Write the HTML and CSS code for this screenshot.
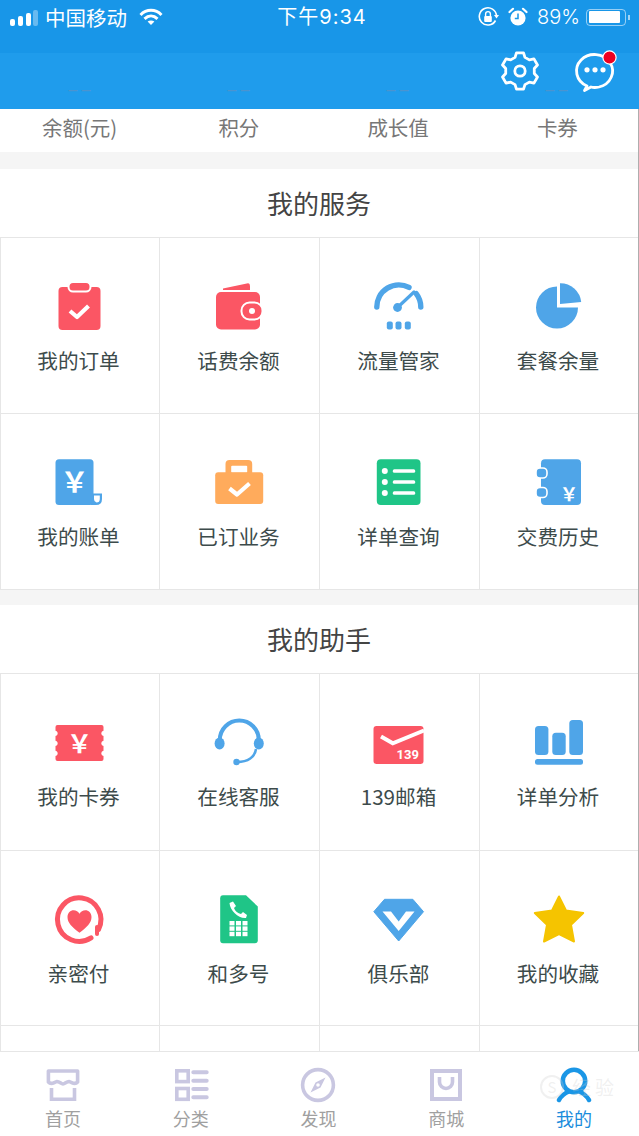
FILE: index.html
```html
<!DOCTYPE html>
<html lang="zh-CN">
<head>
<meta charset="utf-8">
<title>我的</title>
<link rel="stylesheet" href="styles.css">
</head>
<body>
<div class="screen">
  <div class="status">
    <div class="status-left">
      <svg class="sig" width="28" height="18" viewBox="0 0 28 18"><rect x="0" y="9" width="5" height="7" rx="2" fill="#fff"/><rect x="8" y="6" width="5" height="10" rx="2" fill="#fff"/><rect x="16" y="3" width="5" height="13" rx="2" fill="#fff"/><rect x="23" y="0" width="5" height="16" rx="2" fill="#fff" opacity=".35"/></svg>
      <span class="carrier">中国移动</span>
      <svg width="24" height="18" viewBox="0 0 24 18" fill="none" stroke="#fff" stroke-width="3"><path d="M1.5 7 C7.5 .8 16.5 .8 22.5 7"/><path d="M5.5 10.8 C9.5 7 14.5 7 18.5 10.8"/><path d="M12 17 L8.6 13.6 C10.6 12 13.4 12 15.4 13.6 Z" fill="#fff" stroke="none"/></svg>
    </div>
    <div class="time">下午9:34</div>
    <div class="status-right">
      <svg width="22" height="22" viewBox="0 0 22 22" fill="none"><path d="M18.5 14.5 A8.6 8.6 0 1 1 19.5 10" stroke="#fff" stroke-width="1.6"/><path d="M17 9 L22 9 L19.5 12.5 Z" fill="#fff"/><rect x="7.2" y="10" width="7.6" height="6" rx="1" fill="#fff"/><path d="M8.6 10 V8 A2.4 2.4 0 0 1 13.4 8 V10" stroke="#fff" stroke-width="1.4"/></svg>
      <svg width="20" height="20" viewBox="0 0 20 20"><circle cx="10" cy="11" r="7.6" fill="#fff"/><path d="M1.5 5 L5 1.8 M18.5 5 L15 1.8" stroke="#fff" stroke-width="2.2" stroke-linecap="round"/><path d="M10 6.5 V11.5 H6.8" stroke="#1896e8" stroke-width="1.5" fill="none"/></svg>
      <span class="pct">89%</span>
      <span class="battery"><span class="battery-fill"></span></span>
      <span class="battery-nub"></span>
    </div>
  </div>

  <header class="header">
    <div class="values"><span>– –</span><span>– –</span><span>– –</span><span>– –</span></div>
    <div class="actions">
      <svg width="40" height="40" viewBox="0 0 40 40" fill="none" stroke="#fff" stroke-width="2.8" stroke-linejoin="round"><path d="M15.04 6.37 L16.47 1.84 H23.53 L24.96 6.37 L29.32 8.89 L33.96 7.86 L37.49 13.98 L34.28 17.48 V22.52 L37.49 26.02 L33.96 32.14 L29.32 31.11 L24.96 33.63 L23.53 38.16 H16.47 L15.04 33.63 L10.68 31.11 L6.04 32.14 L2.51 26.02 L5.72 22.52 V17.48 L2.51 13.98 L6.04 7.86 L10.68 8.89 Z"/><circle cx="20" cy="20" r="5.2"/></svg>
      <svg width="40" height="40" viewBox="0 0 40 40" fill="none"><path d="M12 35 A18 16.5 0 1 1 24 36 C21 36.6 18 36.6 16 36 L9.5 39.5 Z" stroke="#fff" stroke-width="2.8" stroke-linejoin="round"/><circle cx="12" cy="18.8" r="2.6" fill="#fff"/><circle cx="20" cy="18.8" r="2.6" fill="#fff"/><circle cx="28" cy="18.8" r="2.6" fill="#fff"/><circle cx="34.5" cy="6.5" r="6.6" fill="#ee0020" stroke="#fff" stroke-width="1.2"/></svg>
    </div>
  </header>

  <main class="content">
    <div class="stats"><span>余额(元)</span><span>积分</span><span>成长值</span><span>卡券</span></div>

    <section class="section">
      <h2 class="title">我的服务</h2>
      <div class="grid">
        <div class="cell">
          <svg class="icon" viewBox="0 0 56 56"><rect x="7.5" y="7" width="42" height="43" rx="4" fill="#fb5664"/><rect x="17.5" y="2" width="22" height="9.5" rx="4.5" fill="#fb5664" stroke="#fff" stroke-width="2"/><path d="M19 31 L26 37 L37.5 26" fill="none" stroke="#fff" stroke-width="4.2" stroke-linejoin="round"/></svg>
          <span class="label">我的订单</span>
        </div>
        <div class="cell">
          <svg class="icon" viewBox="0 0 56 56"><path d="M12 8.5 L37 3.2 Q39 3 39 6 V10 H12 Z" fill="#fb5664"/><rect x="5" y="12" width="44" height="37.5" rx="5" fill="#fb5664"/><rect x="30.5" y="22.5" width="21" height="17" rx="8" fill="#fb5664" stroke="#fff" stroke-width="2"/><circle cx="41" cy="31" r="3" fill="#fff"/></svg>
          <span class="label">话费余额</span>
        </div>
        <div class="cell">
          <svg class="icon" viewBox="0 0 56 56" fill="none"><path d="M5.8 27 A22 22 0 0 1 38 7.4" stroke="#4fa5e8" stroke-width="5.4" stroke-linecap="round"/><path d="M45.2 13.6 A22 22 0 0 1 49.8 27" stroke="#4fa5e8" stroke-width="5.4" stroke-linecap="round"/><path d="M26.5 27.5 L43 12" stroke="#4fa5e8" stroke-width="3.2" stroke-linecap="round"/><circle cx="26.5" cy="27.5" r="4.4" fill="#4fa5e8"/><rect x="15.8" y="41.5" width="6" height="8" rx="2" fill="#4fa5e8"/><rect x="24.5" y="41.5" width="6" height="8" rx="2" fill="#4fa5e8"/><rect x="33.8" y="41.5" width="6" height="8" rx="2" fill="#4fa5e8"/></svg>
          <span class="label">流量管家</span>
        </div>
        <div class="cell">
          <svg class="icon" viewBox="0 0 56 56"><path d="M26 6.5 V27.5 H47 A21 21 0 1 1 26 6.5 Z" fill="#4fa5e8"/><path d="M29 3.2 A21 21 0 0 1 50.2 22 L29 24 Z" fill="#4fa5e8"/></svg>
          <span class="label">套餐余量</span>
        </div>
        <div class="cell">
          <svg class="icon" viewBox="0 0 56 56"><rect x="4.5" y="3.3" width="38" height="45.7" rx="3.5" fill="#4fa5e8"/><path d="M40 37.5 H51 V43 Q51 49 45 49 H40 Z" fill="#4fa5e8"/><path d="M43 39.6 H48.8 V43 Q48.8 46.6 45.5 46.6 Q43 46 43 43 Z" fill="#fff"/><text class="yen" x="23.5" y="37" font-size="28">￥</text></svg>
          <span class="label">我的账单</span>
        </div>
        <div class="cell">
          <svg class="icon" viewBox="0 0 56 56"><rect x="14.5" y="4" width="26.7" height="20" rx="4" fill="#ffab5c"/><rect x="20.2" y="9.7" width="16" height="7" rx="1" fill="#fff"/><rect x="4.2" y="16.3" width="48" height="31.7" rx="3" fill="#ffab5c"/><path d="M18.5 32.5 L26 38.5 L38.5 27.5" fill="none" stroke="#fff" stroke-width="4.2" stroke-linejoin="round"/></svg>
          <span class="label">已订业务</span>
        </div>
        <div class="cell">
          <svg class="icon" viewBox="0 0 56 56"><rect x="5.8" y="3.3" width="43.7" height="45.7" rx="4" fill="#1fc587"/><circle cx="13.8" cy="15" r="3" fill="#fff"/><circle cx="13.8" cy="26" r="3" fill="#fff"/><circle cx="13.8" cy="37" r="3" fill="#fff"/><rect x="21.8" y="13.2" width="22.4" height="3.6" rx="1.5" fill="#fff"/><rect x="21.8" y="24.2" width="22.4" height="3.6" rx="1.5" fill="#fff"/><rect x="21.8" y="35.2" width="22.4" height="3.6" rx="1.5" fill="#fff"/></svg>
          <span class="label">详单查询</span>
        </div>
        <div class="cell">
          <svg class="icon" viewBox="0 0 56 56"><rect x="10" y="3.3" width="40" height="45.7" rx="4" fill="#4fa5e8"/><rect x="5" y="12" width="11" height="10" rx="4" fill="#4fa5e8" stroke="#fff" stroke-width="1.6"/><rect x="5" y="31.5" width="11" height="10" rx="4" fill="#4fa5e8" stroke="#fff" stroke-width="1.6"/><text class="yen" x="38" y="45" font-size="18">￥</text></svg>
          <span class="label">交费历史</span>
        </div>
      </div>
    </section>

    <section class="section">
      <h2 class="title">我的助手</h2>
      <div class="grid grid-b">
        <div class="cell">
          <svg class="icon" viewBox="0 0 56 56"><rect x="4.5" y="9" width="48" height="36" rx="2" fill="#fb5664"/><g fill="#fff"><circle cx="4" cy="17.3" r="2.6"/><circle cx="4" cy="27.3" r="2.6"/><circle cx="4" cy="37.3" r="2.6"/><circle cx="53" cy="17.3" r="2.6"/><circle cx="53" cy="27.3" r="2.6"/><circle cx="53" cy="37.3" r="2.6"/></g><text class="yen" x="28.5" y="37" font-size="25">￥</text></svg>
          <span class="label">我的卡券</span>
        </div>
        <div class="cell">
          <svg class="icon" viewBox="0 0 56 56" fill="none"><path d="M8.8 27 V24 A19.5 19.5 0 0 1 47.8 24 V27" stroke="#4fa5e8" stroke-width="4"/><ellipse cx="8.6" cy="27.5" rx="5" ry="6" fill="#4fa5e8"/><ellipse cx="47.8" cy="27.5" rx="5" ry="6" fill="#4fa5e8"/><path d="M45 33 C44 41 37 46 26 46" stroke="#4fa5e8" stroke-width="2.6"/><circle cx="25.5" cy="46" r="3.2" fill="#4fa5e8"/></svg>
          <span class="label">在线客服</span>
        </div>
        <div class="cell">
          <svg class="icon" viewBox="0 0 56 56"><rect x="2.5" y="10" width="50" height="38" rx="3" fill="#fb5664"/><path d="M10 20.5 L21.8 27.3 L53 14.5" fill="none" stroke="#fff" stroke-width="4"/><text class="mail-num" x="36.8" y="43" font-size="13">139</text></svg>
          <span class="label">139邮箱</span>
        </div>
        <div class="cell">
          <svg class="icon" viewBox="0 0 56 56" fill="#4fa5e8"><rect x="4" y="10" width="13.4" height="29" rx="3.5"/><rect x="21.3" y="16.7" width="13.4" height="22.3" rx="3.5"/><rect x="38.3" y="4" width="13.7" height="35" rx="3.5"/><rect x="4" y="43" width="48" height="5.7" rx="2.5"/></svg>
          <span class="label">详单分析</span>
        </div>
        <div class="cell">
          <svg class="icon" viewBox="0 0 56 56" fill="none"><path d="M40 44.8 A21.7 21.7 0 1 1 47.5 36.5" stroke="#fb5664" stroke-width="5" stroke-linecap="round"/><path d="M46 34 L46 41" stroke="#fb5664" stroke-width="4" stroke-linecap="round"/><path d="M28.5 39.7 C21 34 16.5 30 16.5 24 C16.5 20 19.5 17.3 22.6 17.3 C25.2 17.3 27.2 18.6 28.5 20.8 C29.8 18.6 31.8 17.3 34.4 17.3 C37.5 17.3 40.5 20 40.5 24 C40.5 30 36 34 28.5 39.7 Z" fill="#fb5664"/></svg>
          <span class="label">亲密付</span>
        </div>
        <div class="cell">
          <svg class="icon" viewBox="0 0 56 56"><path d="M12 2.3 H35 L46.8 13.5 V47.3 Q46.8 50.3 43.8 50.3 H12 Q9.2 50.3 9.2 47.3 V5.3 Q9.2 2.3 12 2.3 Z" fill="#1fc587"/><path d="M18.5 10 L22 8.5 L25 13 L23 15 C24 18 27 20.5 30 21 L32 19 L36 22 L35 25 C28 26 19 18 18.5 10 Z" fill="#fff"/><g fill="#fff"><rect x="18.5" y="28" width="5" height="4.4"/><rect x="25" y="28" width="5" height="4.4"/><rect x="31.5" y="28" width="5" height="4.4"/><rect x="18.5" y="33.4" width="5" height="4.4"/><rect x="25" y="33.4" width="5" height="4.4"/><rect x="31.5" y="33.4" width="5" height="4.4"/><rect x="18.5" y="38.8" width="5" height="4.4"/><rect x="25" y="38.8" width="5" height="4.4"/><rect x="31.5" y="38.8" width="5" height="4.4"/></g></svg>
          <span class="label">和多号</span>
        </div>
        <div class="cell">
          <svg class="icon" viewBox="0 0 56 56"><path d="M13.5 6.3 H41.8 L52.5 18.7 L27.7 48 L2.8 18.7 Z" fill="#4fa5e8" stroke="#4fa5e8" stroke-linejoin="round"/><path d="M11.5 18.5 L27.7 38 L43.5 18.5 H35 L27.7 28.5 L20 18.5 Z" fill="#fff"/></svg>
          <span class="label">俱乐部</span>
        </div>
        <div class="cell">
          <svg class="icon" viewBox="0 0 56 56"><path d="M28 3.5 L35 17.5 L52.2 20 L40 31.8 L43 48.5 L28 41 L13 48.5 L16 31.8 L3.8 20 L21 17.5 Z" fill="#f5c400" stroke="#f5c400" stroke-width="2" stroke-linejoin="round"/></svg>
          <span class="label">我的收藏</span>
        </div>
        <div class="cell"></div>
        <div class="cell"></div>
        <div class="cell"></div>
        <div class="cell"></div>
      </div>
    </section>
  </main>

  <nav class="tabbar">
    <div class="tab">
      <svg class="tab-icon" viewBox="0 0 36 36" fill="none" stroke="#c9c7e1" stroke-width="3.6"><path d="M3.4 4 H32.6 V15 C29.5 18.5 27 15 24 14.5 C21.5 14.5 20 17 18 17 C16 17 14.5 14.5 12 14.5 C9 15 6.5 18.5 3.4 15 Z" stroke-linejoin="round"/><path d="M6.5 21 V32.2 H29.5 V21"/></svg>
      <span>首页</span>
    </div>
    <div class="tab">
      <svg class="tab-icon" viewBox="0 0 36 36" fill="none" stroke="#c9c7e1" stroke-width="3.6"><rect x="3.8" y="3.8" width="11.4" height="10.8"/><rect x="3.8" y="21.5" width="11.4" height="10.8"/><path d="M20.3 5.3 H33.7 M20.3 13.7 H33.7 M20.3 22 H33.7 M20.3 30.3 H33.7" stroke-width="4" stroke-linecap="round"/></svg>
      <span>分类</span>
    </div>
    <div class="tab">
      <svg class="tab-icon" viewBox="0 0 36 36" fill="none"><circle cx="18" cy="18" r="15.4" stroke="#c9c7e1" stroke-width="3.6"/><path d="M25.5 10.5 L20.5 20.5 L15.5 15.5 Z M10.5 25.5 L15.5 15.5 L20.5 20.5 Z" fill="#c9c7e1"/><circle cx="18" cy="18" r="1.8" fill="#fff"/></svg>
      <span>发现</span>
    </div>
    <div class="tab">
      <svg class="tab-icon" viewBox="0 0 36 36" fill="none" stroke="#c9c7e1"><rect x="4" y="4" width="28" height="28" stroke-width="4"/><path d="M11.5 10 V15 A6.5 6.5 0 0 0 24.5 15 V10" stroke-width="3.6"/></svg>
      <span>商城</span>
    </div>
    <div class="tab tab-active">
      <svg class="tab-icon" viewBox="0 0 36 36" fill="none" stroke="#1a96e6"><circle cx="18" cy="14" r="11.2" stroke-width="4.6"/><path d="M3 33 C6 28 9 26 13 24.5 M33 33 C30 28 27 26 23 24.5" stroke-width="4.4" stroke-linecap="round"/></svg>
      <span>我的</span>
    </div>
    <div class="watermark"><span class="wm-s">S</span><span>经验</span></div>
  </nav>
</div>
</body>
</html>
```
FILE: styles.css
```css
* { box-sizing: border-box; }
html, body { margin: 0; padding: 0; }
body {
  width: 639px;
  height: 1136px;
  overflow: hidden;
  background: #fff;
  font-family: "Noto Sans CJK SC", "Noto Sans", sans-serif;
}
.screen { width: 639px; height: 1136px; display: flex; flex-direction: column; overflow: hidden; }

.status {
  flex: none;
  height: 53px;
  padding: 0 9px 19px 10px;
  background: #1896e8;
  color: #fff;
  display: grid;
  grid-template-columns: 1fr auto 1fr;
  align-items: center;
}
.status-left { display: flex; align-items: center; }
.sig { margin-right: 7px; margin-top: 4px; }
.carrier { font-size: 20.5px; line-height: 28px; margin-right: 12px; }
.time { margin-left: 4px; font-family: Inter, "Noto Sans CJK SC", sans-serif; font-size: 20px; line-height: 28px; letter-spacing: 1px; }
.status-right { display: flex; align-items: center; justify-content: flex-end; }
.status-right svg:first-child { margin-right: 9px; }
.pct { font-family: Inter, sans-serif; font-weight: 300; font-size: 20px; margin: 0 6px 0 9px; }
.battery { width: 40px; height: 17px; border: 1.5px solid rgba(255, 255, 255, .55); border-radius: 4px; padding: 1.5px; display: block; }
.battery-fill { display: block; width: 31px; height: 100%; background: #fff; border-radius: 1px; }
.battery-nub { width: 2px; height: 5px; margin-left: 2px; background: rgba(255, 255, 255, .6); }

.header { flex: none; height: 56px; background: #1f9cec; position: relative; }
.values { height: 100%; padding-right: 3px; display: grid; grid-template-columns: repeat(4, 1fr); justify-items: center; align-items: end; font-family: "Liberation Sans", sans-serif; font-size: 16px; line-height: 38px; color: #4a94d0; }
.actions { position: absolute; top: -2px; right: 24px; display: flex; gap: 35px; }
.actions svg { overflow: visible; display: block; }

.content { flex: 1; min-height: 0; overflow: hidden; background: #f5f5f5; border-right: 1px solid #aeaeae; }
.stats { height: 43px; padding: 0 1px 6px 0; background: #fff; display: grid; grid-template-columns: repeat(4, 1fr); justify-items: center; align-items: center; font-size: 20.5px; line-height: 37px; color: #777; }
.section { margin-top: 17px; background: #fff; }
.section + .section { margin-top: 15px; }
.title { margin: 0; height: 68px; font-size: 26px; font-weight: 400; line-height: 68px; text-align: center; color: #444; }
.grid { display: grid; grid-template-columns: 160px 160px 160px 158px; grid-auto-rows: 176px; border-top: 1px solid #e6e6e6; }
.grid-b { grid-template-rows: 177px 175px; }
.cell { display: flex; flex-direction: column; align-items: center; padding: 42px 2px 0 0; border-right: 1px solid #e6e6e6; border-bottom: 1px solid #e6e6e6; }
.cell:nth-child(4n) { border-right: 0; }
.cell:nth-child(4n+1) { box-shadow: inset 1px 0 0 #e6e6e6; }
.icon { width: 56px; height: 56px; flex: none; display: block; overflow: visible; margin-left: 1px; }
.label { margin-top: 10px; font-size: 20.6px; line-height: 28px; color: #3d4b4b; white-space: nowrap; }
.yen { fill: #fff; font-family: "Noto Sans CJK SC", sans-serif; font-weight: 700; text-anchor: middle; }
.mail-num { fill: #fff; font-family: Roboto, sans-serif; font-weight: 700; text-anchor: middle; }

.tabbar { flex: none; height: 85px; border-top: 1px solid #e6e6e6; background: #fff; display: grid; grid-template-columns: repeat(5, 1fr); position: relative; }
.tab { display: flex; flex-direction: column; align-items: center; padding: 15px 2px 0 0; font-size: 18px; line-height: 26px; color: #a0a0a0; }
.tab-icon { width: 36px; height: 36px; display: block; flex: none; margin-bottom: 2px; }
.tab-active { color: #1a8cdc; }
.watermark { position: absolute; left: 540px; top: 22px; display: flex; align-items: center; gap: 8px; font-size: 19px; line-height: 26px; letter-spacing: 4px; color: rgba(205, 205, 205, .3); }
.wm-s { width: 24px; height: 24px; border: 2px solid rgba(205, 205, 205, .3); border-radius: 50%; font-size: 15px; line-height: 20px; letter-spacing: 0; text-align: center; }
```
